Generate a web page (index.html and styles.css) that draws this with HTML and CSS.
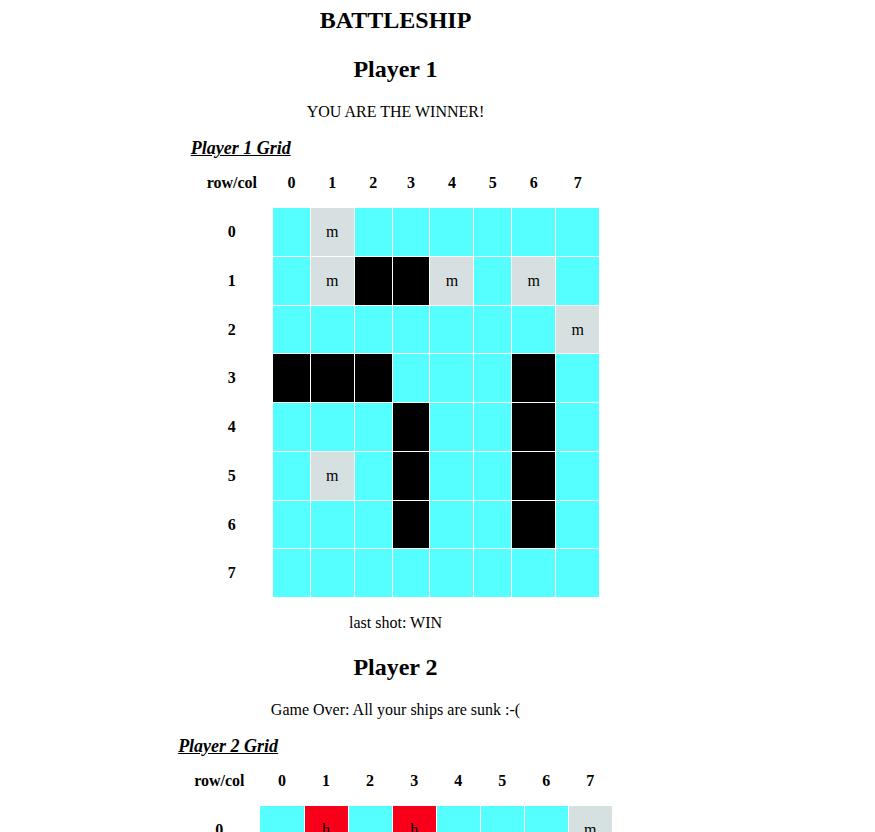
FILE: index.html
```html
<!DOCTYPE html>
<html lang="en">
<head>
    <meta charset="UTF-8">
    <title>Battleship</title>
    <link rel="stylesheet" href="styles.css">
</head>
<body>
    <main class="game">
        <h1 class="title">BATTLESHIP</h1>

        <section class="player">
            <h2>Player 1</h2>
            <p class="status">YOU ARE THE WINNER!</p>
            <table class="grid" id="grid-1">
                <caption>Player 1 Grid</caption>
            </table>
            <p class="last-shot">last shot: WIN</p>
        </section>

        <section class="player">
            <h2>Player 2</h2>
            <p class="status">Game Over: All your ships are sunk :-(</p>
            <table class="grid" id="grid-2">
                <caption>Player 2 Grid</caption>
            </table>
            <p class="last-shot">last shot: MISS</p>
        </section>
    </main>
<script>
// . water, S ship, m miss, h hit
const grids = {
  'grid-1': [
    '.m......',
    '.mSSm.m.',
    '.......m',
    'SSS...S.',
    '...S..S.',
    '.m.S..S.',
    '...S..S.',
    '........'
  ],
  'grid-2': [
    '.h.h...m',
    '.h.h.m..',
    'mh.h..m.',
    '...hm...',
    '..m...h.',
    '.m....h.',
    '...m..h.',
    'm.....h.'
  ]
};

const kinds = { '.': 'water', 'S': 'ship', 'm': 'miss', 'h': 'hit' };

function renderGrid(id, rows) {
  const table = document.getElementById(id);
  const head = document.createElement('tr');
  const corner = document.createElement('th');
  corner.textContent = 'row/col';
  head.appendChild(corner);
  for (let c = 0; c < 8; c++) {
    const th = document.createElement('th');
    th.className = 'col-head';
    th.textContent = c;
    head.appendChild(th);
  }
  table.appendChild(head);

  rows.forEach((row, r) => {
    const tr = document.createElement('tr');
    const th = document.createElement('th');
    th.textContent = r;
    tr.appendChild(th);
    [...row].forEach(ch => {
      const td = document.createElement('td');
      td.className = kinds[ch];
      if (ch === 'm' || ch === 'h') td.textContent = ch;
      tr.appendChild(td);
    });
    table.appendChild(tr);
  });
}

Object.keys(grids).forEach(id => renderGrid(id, grids[id]));
</script>
</body>
</html>
```

FILE: styles.css
```css
body {
    margin: 0;
    background-color: #fff;
    color: #000;
    font-family: "Liberation Serif", "Times New Roman", serif;
    font-size: 16px;
    line-height: 1.125;
}
.game {
    width: 775px;
    padding: 0 8px;
    text-align: center;
}
.title {
    font-size: 24px;
    margin: 7px 0 22px;
}
h2 {
    font-size: 24px;
    margin: 22px 0 20px;
}
p {
    margin: 16px 0;
}
.grid {
    margin: 0 auto;
    border-spacing: 1px;
}
.grid caption {
    text-align: left;
    font-size: 18px;
    font-weight: bold;
    font-style: italic;
    text-decoration: underline;
    padding-top: 1px;
}
.grid th, .grid td {
    padding: 15px;
    line-height: 17.75px;
}
.grid td {
    width: 6px;
    padding: 15px 15.3px;
}
.grid th.col-head {
    padding: 15px 14.4px;
}
.water {
    background-color: #55ffff;
}
.miss {
    background-color: #d6e0e0;
}
.ship {
    background-color: #000;
}
.hit {
    background-color: #f8001a;
}
```
